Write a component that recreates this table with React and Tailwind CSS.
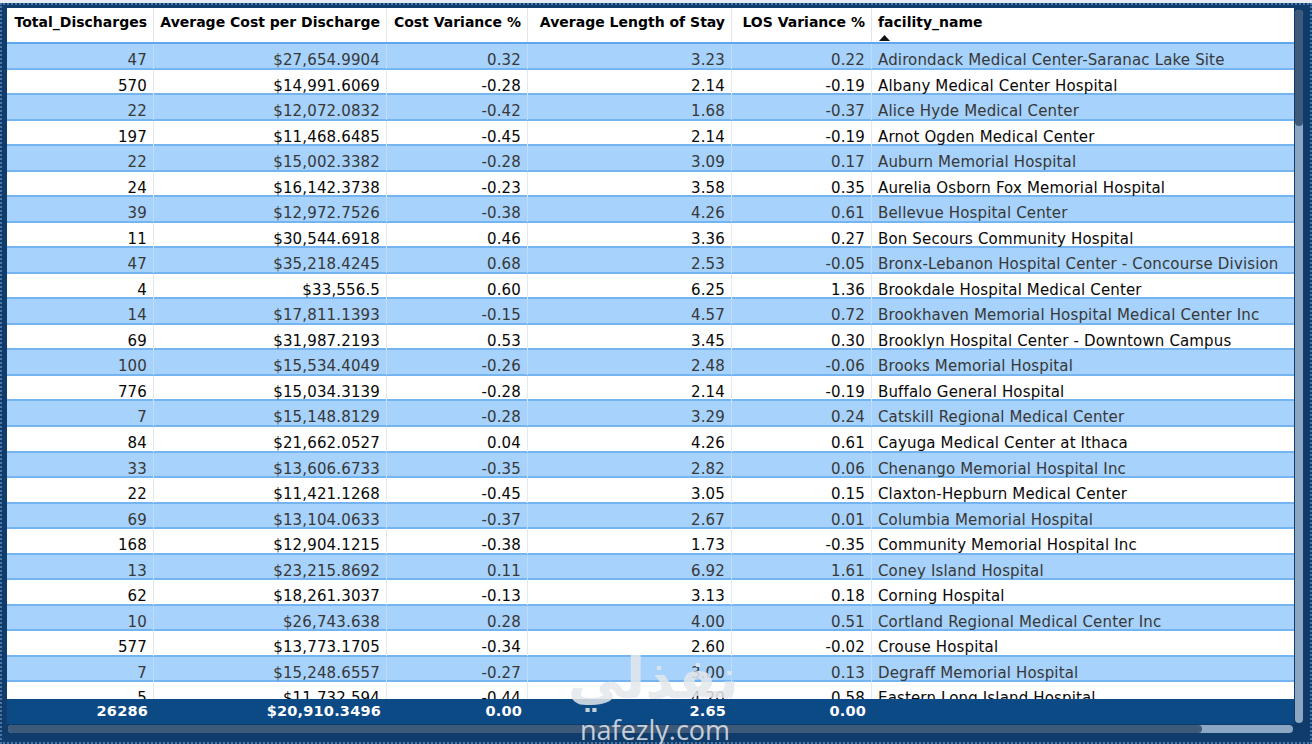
import React from "react";

const rows = [
  ["47", "$27,654.9904", "0.32", "3.23", "0.22", "Adirondack Medical Center-Saranac Lake Site"],
  ["570", "$14,991.6069", "-0.28", "2.14", "-0.19", "Albany Medical Center Hospital"],
  ["22", "$12,072.0832", "-0.42", "1.68", "-0.37", "Alice Hyde Medical Center"],
  ["197", "$11,468.6485", "-0.45", "2.14", "-0.19", "Arnot Ogden Medical Center"],
  ["22", "$15,002.3382", "-0.28", "3.09", "0.17", "Auburn Memorial Hospital"],
  ["24", "$16,142.3738", "-0.23", "3.58", "0.35", "Aurelia Osborn Fox Memorial Hospital"],
  ["39", "$12,972.7526", "-0.38", "4.26", "0.61", "Bellevue Hospital Center"],
  ["11", "$30,544.6918", "0.46", "3.36", "0.27", "Bon Secours Community Hospital"],
  ["47", "$35,218.4245", "0.68", "2.53", "-0.05", "Bronx-Lebanon Hospital Center - Concourse Division"],
  ["4", "$33,556.5", "0.60", "6.25", "1.36", "Brookdale Hospital Medical Center"],
  ["14", "$17,811.1393", "-0.15", "4.57", "0.72", "Brookhaven Memorial Hospital Medical Center Inc"],
  ["69", "$31,987.2193", "0.53", "3.45", "0.30", "Brooklyn Hospital Center - Downtown Campus"],
  ["100", "$15,534.4049", "-0.26", "2.48", "-0.06", "Brooks Memorial Hospital"],
  ["776", "$15,034.3139", "-0.28", "2.14", "-0.19", "Buffalo General Hospital"],
  ["7", "$15,148.8129", "-0.28", "3.29", "0.24", "Catskill Regional Medical Center"],
  ["84", "$21,662.0527", "0.04", "4.26", "0.61", "Cayuga Medical Center at Ithaca"],
  ["33", "$13,606.6733", "-0.35", "2.82", "0.06", "Chenango Memorial Hospital Inc"],
  ["22", "$11,421.1268", "-0.45", "3.05", "0.15", "Claxton-Hepburn Medical Center"],
  ["69", "$13,104.0633", "-0.37", "2.67", "0.01", "Columbia Memorial Hospital"],
  ["168", "$12,904.1215", "-0.38", "1.73", "-0.35", "Community Memorial Hospital Inc"],
  ["13", "$23,215.8692", "0.11", "6.92", "1.61", "Coney Island Hospital"],
  ["62", "$18,261.3037", "-0.13", "3.13", "0.18", "Corning Hospital"],
  ["10", "$26,743.638", "0.28", "4.00", "0.51", "Cortland Regional Medical Center Inc"],
  ["577", "$13,773.1705", "-0.34", "2.60", "-0.02", "Crouse Hospital"],
  ["7", "$15,248.6557", "-0.27", "3.00", "0.13", "Degraff Memorial Hospital"],
  ["5", "$11,732.594", "-0.44", "4.20", "0.58", "Eastern Long Island Hospital"],
];

const headers = [
  "Total_Discharges",
  "Average Cost per Discharge",
  "Cost Variance %",
  "Average Length of Stay",
  "LOS Variance %",
];

const grid = "grid grid-cols-[147px_233px_141px_204px_140px_422px]";
const font = { fontFamily: '"DejaVu Sans", sans-serif' };

export default function App() {
  return (
    <div className="w-[1312px] h-[744px] bg-[#e6ecf2] flex flex-col overflow-hidden relative" style={font}>
      <div className="h-[3px] shrink-0 bg-[#e6ecf2]" />
      <div className="flex-1 min-h-0 overflow-hidden bg-[#0f3c6b] border-2 border-dotted border-[#4a78a6] pl-[5px] pt-[3px] pr-[6px] pb-[8px] flex gap-[1px]">
        <div className="w-[1287px] min-h-0 flex flex-col">
          {/* header */}
          <div className={`${grid} h-[36px] shrink-0 bg-white border-b-2 border-[#5ea7ec]`}>
            {headers.map((h) => (
              <div
                key={h}
                className="border-r border-[#e3e6ea] text-right pr-[6px] pt-[5px] text-[14px] leading-[18px] font-bold text-black whitespace-nowrap"
              >
                {h}
              </div>
            ))}
            <div className="pl-[6px] pt-[5px] text-[14px] leading-[18px] font-bold text-black">
              <div>facility_name</div>
              <svg width="11" height="6" viewBox="0 0 11 6" className="mt-[4px] ml-[1px]">
                <polygon points="0,6 5.5,0 11,6" fill="#111" />
              </svg>
            </div>
          </div>
          {/* body */}
          <div className="flex-1 min-h-0 overflow-hidden">
            {rows.map((r, i) => {
              const blue = i % 2 === 0;
              return (
                <div
                  key={i}
                  className={`${grid} h-[25.54px] border-b-2 border-[#74b4f0] text-[15px] leading-[18px] tracking-[0.15px] ${
                    blue ? "bg-[#a6d2fb] text-[#383838]" : "bg-white text-[#080808]"
                  }`}
                >
                  {r.slice(0, 5).map((c, j) => (
                    <div
                      key={j}
                      className={`flex items-center justify-end pr-[6px] pt-[7px] border-r whitespace-nowrap ${
                        blue ? "border-[#bcdcfa]" : "border-[#e2e9f0]"
                      }`}
                    >
                      {c}
                    </div>
                  ))}
                  <div className="flex items-center pl-[6px] pt-[7px] whitespace-nowrap overflow-hidden">{r[5]}</div>
                </div>
              );
            })}
          </div>
          {/* footer */}
          <div className={`${grid} h-[25px] shrink-0 bg-[#0c4a86] text-white font-bold text-[14.5px] tracking-[0.2px]`}>
            {["26286", "$20,910.3496", "0.00", "2.65", "0.00"].map((c, j) => (
              <div key={j} className="flex items-center justify-end pr-[6px] whitespace-nowrap">
                {c}
              </div>
            ))}
            <div />
          </div>
          {/* horizontal scrollbar */}
          <div className="h-[10px] shrink-0 py-[1px] px-[1px]">
            <div className="h-[8px] rounded-full bg-[#8ca7c3] flex">
              <div className="w-[1194px] h-full rounded-full bg-[#3e5a7b]" />
            </div>
          </div>
        </div>
        {/* vertical scrollbar */}
        <div className="w-[8px] pt-[2px] pb-[11px]">
          <div className="h-full rounded-full bg-[#8ca7c3] flex flex-col">
            <div className="h-[116px] w-full rounded-full bg-[#3e5a7b]" />
          </div>
        </div>
      </div>

      {/* watermark overlay */}
      <div className="absolute left-[574px] top-[646px] w-[165px] h-[98px] pointer-events-none text-[#e3e7eb]/85">
        <div
          className="absolute left-0 top-0 w-[165px] text-center text-[56px] leading-[66px] font-bold"
          style={{ fontFamily: '"DejaVu Sans", sans-serif' }}
          dir="rtl"
        >
          نفذلي
        </div>
        <div
          className="absolute left-[6px] top-[70px] text-[27px] leading-[28px]"
          style={{ fontFamily: '"Open Sans", sans-serif' }}
        >
          nafezly.com
        </div>
      </div>
    </div>
  );
}
